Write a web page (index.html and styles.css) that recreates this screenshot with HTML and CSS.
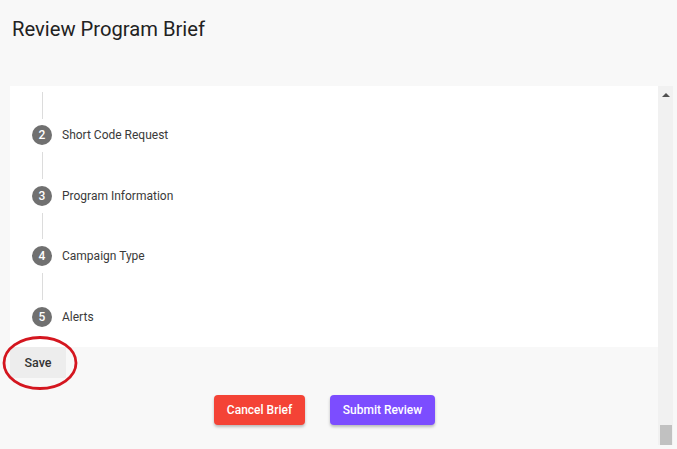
FILE: index.html
```html
<!DOCTYPE html>
<html lang="en">
<head>
  <meta charset="UTF-8" />
  <title>Review Program Brief</title>
  <link rel="stylesheet" href="styles.css">
</head>
<body>
  <h1 class="page-title">Review Program Brief</h1>

  <div class="review-area">
    <div class="review-main">
      <div class="stepper">
        <div class="step-line step-line-top"></div>
        <div class="step"><span class="step-num">2</span><span class="step-label">Short Code Request</span></div>
        <div class="step-line"></div>
        <div class="step"><span class="step-num">3</span><span class="step-label">Program Information</span></div>
        <div class="step-line"></div>
        <div class="step"><span class="step-num">4</span><span class="step-label">Campaign Type</span></div>
        <div class="step-line"></div>
        <div class="step"><span class="step-num">5</span><span class="step-label">Alerts</span></div>
      </div>

      <div class="save-row">
        <button class="btn-save">Save</button>
        <!-- hand drawn annotation round the save button -->
        <svg class="save-mark" width="80" height="58" viewBox="0 0 80 58" aria-hidden="true">
          <ellipse cx="40" cy="29" rx="36" ry="25.5" fill="none" stroke="#d4161f" stroke-width="2.8" />
        </svg>
      </div>

      <div class="actions">
        <button class="btn btn-cancel">Cancel Brief</button>
        <button class="btn btn-submit">Submit Review</button>
      </div>
    </div>

    <div class="scrollbar" aria-hidden="true">
      <span class="scroll-arrow"></span>
      <span class="scroll-thumb"></span>
    </div>
  </div>
</body>
</html>
```

FILE: styles.css
```css
/* RESET + FOND */
* { margin: 0; padding: 0; box-sizing: border-box; }
body {
  background: #f8f8f8;
  font-family: Roboto, "Liberation Sans", sans-serif;
  color: #212121;
  height: 449px;
  overflow: hidden;
}

.page-title {
  font-size: 20.2px;
  font-weight: 400;
  line-height: 24px;
  padding: 17px 0 0 12px;
  height: 86px;
  color: #222;
}

.review-area {
  display: flex;
  height: 359px;
  padding-left: 10px;
}
.review-main {
  width: 648px;
  display: flex;
  flex-direction: column;
}

.stepper {
  background: #fff;
  height: 261px;
  padding-left: 22px;
  display: flex;
  flex-direction: column;
}
.step-line {
  width: 1px;
  margin-left: 10px;
  height: 26.7px;
  margin-top: 7px;
  margin-bottom: 7px;
  background: #dcdcdc;
}
.step-line-top {
  height: 27px;
  margin-top: 6px;
  margin-bottom: 6px;
}
.step {
  display: flex;
  align-items: center;
  height: 20px;
}
.step-num {
  width: 20px;
  height: 20px;
  border-radius: 50%;
  background: #707070;
  color: #fff;
  font-size: 12px;
  font-weight: 500;
  display: flex;
  align-items: center;
  justify-content: center;
}
.step-label {
  margin-left: 10px;
  font-size: 12px;
  color: #3a3a3a;
}

/* Save */
.save-row {
  position: relative;
  height: 31px;
}
.btn-save {
  width: 56px;
  height: 31px;
  border: none;
  background: #ededed;
  font-family: inherit;
  font-size: 12.5px;
  font-weight: 500;
  color: #333;
}
.save-mark {
  position: absolute;
  left: -10px;
  top: -13px;
}

.actions {
  display: flex;
  gap: 25px;
  padding: 17px 0 0 204px;
}
.btn {
  height: 30px;
  border: none;
  border-radius: 4px;
  color: #fff;
  font-family: inherit;
  font-size: 12px;
  font-weight: 500;
  box-shadow: 0 2px 3px rgba(0, 0, 0, 0.25);
}
.btn-cancel { width: 91px; background: #f44336; }
.btn-submit { width: 105px; background: #7c4dff; }

/* fausse barre de défilement */
.scrollbar {
  width: 15px;
  background: #f1f1f1;
  display: flex;
  flex-direction: column;
  justify-content: space-between;
  align-items: center;
}
.scroll-arrow {
  margin-top: 7px;
  width: 0;
  height: 0;
  border-left: 4px solid transparent;
  border-right: 4px solid transparent;
  border-bottom: 4px solid #505050;
}
.scroll-thumb {
  width: 12px;
  height: 20px;
  background: #c1c1c1;
}
```
